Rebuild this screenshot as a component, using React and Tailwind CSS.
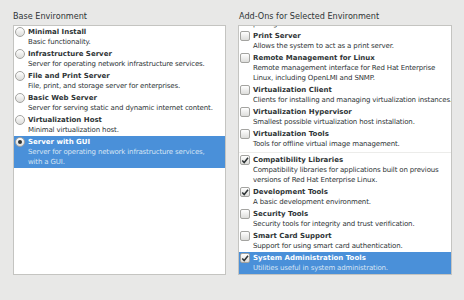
import React from "react";

const left = [
  { t: "Minimal Install", d: ["Basic functionality."] },
  { t: "Infrastructure Server", d: ["Server for operating network infrastructure services."] },
  { t: "File and Print Server", d: ["File, print, and storage server for enterprises."] },
  { t: "Basic Web Server", d: ["Server for serving static and dynamic internet content."] },
  { t: "Virtualization Host", d: ["Minimal virtualization host."] },
  { t: "Server with GUI", d: ["Server for operating network infrastructure services,", "with a GUI."], sel: true },
];

const right = [
  { t: "Print Server", d: ["Allows the system to act as a print server."] },
  { t: "Remote Management for Linux", d: ["Remote management interface for Red Hat Enterprise", "Linux, including OpenLMI and SNMP."] },
  { t: "Virtualization Client", d: ["Clients for installing and managing virtualization instances."] },
  { t: "Virtualization Hypervisor", d: ["Smallest possible virtualization host installation."] },
  { t: "Virtualization Tools", d: ["Tools for offline virtual image management."] },
  { sep: true },
  { t: "Compatibility Libraries", d: ["Compatibility libraries for applications built on previous", "versions of Red Hat Enterprise Linux."], chk: true },
  { t: "Development Tools", d: ["A basic development environment."], chk: true },
  { t: "Security Tools", d: ["Security tools for integrity and trust verification."] },
  { t: "Smart Card Support", d: ["Support for using smart card authentication."] },
  { t: "System Administration Tools", d: ["Utilities useful in system administration."], chk: true, sel: true },
];

function Radio({ on }) {
  return (
    <div className="w-[10px] h-[10px] rounded-full border border-[#a3a3a0] bg-gradient-to-b from-[#ffffff] to-[#dddddb] flex items-center justify-center shrink-0">
      {on && <div className="w-[4px] h-[4px] rounded-full bg-[#2e3436]" />}
    </div>
  );
}

function Check({ on }) {
  return (
    <div className="w-[10px] h-[10px] rounded-[2px] border border-[#a3a3a0] bg-gradient-to-b from-[#ffffff] to-[#dddddb] flex items-center justify-center shrink-0">
      {on && (
        <svg width="9" height="9" viewBox="0 0 9 9">
          <path d="M1.4 4.4 L3.6 6.8 L7.9 1.5" fill="none" stroke="#2e3436" strokeWidth="1.7" />
        </svg>
      )}
    </div>
  );
}

function Row({ item, kind }) {
  const sel = item.sel;
  return (
    <div className={`flex gap-[3px] pl-[1px] pt-[1px] pb-[1px] ${sel ? "bg-[#4a90d9]" : ""}`}>
      <div className="h-[10px] flex items-center">
        {kind === "radio" ? <Radio on={sel} /> : <Check on={item.chk} />}
      </div>
      <div className="leading-[10px] whitespace-nowrap">
        <div className={`font-bold ${sel ? "text-white" : "text-[#2e3436]"}`}>{item.t}</div>
        {item.d.map((l, i) => (
          <div key={i} className={`tracking-[-0.15px] ${sel ? "text-[#d6e4f4]" : "text-[#2e3436]"}`}>{l}</div>
        ))}
      </div>
    </div>
  );
}

export default function App() {
  return (
    <div className="w-[464px] h-[300px] bg-[#e8e8e7] flex gap-[12px] pl-[13px] pt-[10px] text-[7px] overflow-hidden" style={{ fontFamily: '"DejaVu Sans", sans-serif' }}>
      <div className="flex flex-col w-[213px]">
        <div className="text-[8.1px] text-[#2e3436] leading-[12px] h-[15px]">Base Environment</div>
        <div className="h-[250px] bg-white border border-[#c4c4c1] overflow-hidden">
          {left.map((it, i) => (
            <Row key={i} item={it} kind="radio" />
          ))}
        </div>
      </div>
      <div className="flex flex-col w-[214px]">
        <div className="text-[8.1px] text-[#2e3436] leading-[12px] h-[15px] pl-[1px]">Add-Ons for Selected Environment</div>
        <div className="h-[250px] bg-white border border-[#c4c4c1] overflow-hidden">
          <div className="-mt-[7px]">
            <div className="pl-[14px] leading-[10px] pb-[1px] text-[#2e3436] tracking-[-0.15px]">packages.</div>
            {right.map((it, i) =>
              it.sep ? (
                <div key={i} className="h-[4px] flex items-center"><div className="h-px w-full bg-[#ececea]" /></div>
              ) : (
                <Row key={i} item={it} kind="check" />
              )
            )}
          </div>
        </div>
      </div>
    </div>
  );
}
